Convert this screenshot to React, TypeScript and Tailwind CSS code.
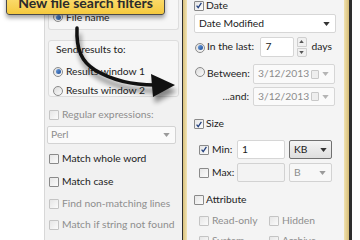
import React from "react";

const font = { fontFamily: "Lato, 'Liberation Sans', sans-serif" };

function Check({ checked = false, disabled = false }: { checked?: boolean; disabled?: boolean }) {
    return (
        <span
            className={`relative inline-flex h-[10px] w-[10px] shrink-0 items-center justify-center rounded-[1px] border bg-gradient-to-br from-[#e6e6e6] to-[#fbfbfb] ${
                disabled ? "border-[#c4c4c4]" : "border-[#8a8a8a]"
            }`}
        >
            {checked && (
                <svg viewBox="0 0 10 10" className="h-[9px] w-[9px]">
                    <path d="M2 5.2 L4 7.6 L8 1.6" fill="none" stroke="#23407e" strokeWidth="1.6" />
                </svg>
            )}
        </span>
    );
}

function Radio({ on = false }: { on?: boolean }) {
    return (
        <span className="inline-flex h-[10px] w-[10px] shrink-0 items-center justify-center rounded-full border border-[#8a8a8a] bg-gradient-to-br from-[#dcdcdc] to-[#fafafa]">
            {on && <span className="h-[5px] w-[5px] rounded-full bg-gradient-to-br from-[#6fa0de] to-[#1d4e99]" />}
        </span>
    );
}

function Caret({ color = "#333" }: { color?: string }) {
    return (
        <svg viewBox="0 0 8 5" className="h-[4px] w-[7px] shrink-0">
            <path d="M0 0 H8 L4 5 Z" fill={color} />
        </svg>
    );
}

function DateBox({ value }: { value: string }) {
    return (
        <div className="ml-auto mr-[9px] flex h-full w-[82px] shrink-0 items-center rounded-[2px] border border-[#d6d6d6] bg-[#fafafa] pl-[4px] pr-[5px] text-[#8c8c8c]">
            <span>{value}</span>
            <span className="ml-auto mr-[3px] h-[9px] w-[8px] rounded-[1px] border border-[#c8c8c8] bg-[#eeeeee]" />
            <Caret color="#b5b5b5" />
        </div>
    );
}

export default function App() {
    return (
        <div
            className="relative flex h-[240px] w-[360px] overflow-hidden whitespace-nowrap bg-white text-[10.3px] text-[#222]"
            style={font}
        >
            {/* left spacer */}
            <div className="w-[44px] shrink-0 bg-white" />

            {/* left search options panel */}
            <div className="flex w-[138px] shrink-0 flex-col border-l border-[#d8d8d8] bg-[#f1f1f1] pl-[3px] *:shrink-0">
                <div className="flex h-[30px] w-[131px] items-end rounded-b-[3px] border-x border-b border-[#dddddd] bg-[#f6f6f6] pb-[4px] pl-[4px]">
                    <div className="flex items-center gap-[3px]">
                        <Radio on />
                        <span>File name</span>
                    </div>
                </div>

                <div className="mt-[10px] flex h-[57px] w-[131px] flex-col rounded-[3px] border border-[#dddddd] bg-[#f6f6f6] pl-[4px]">
                    <span className="mt-[2px] pl-[3px] leading-[13px]">Send results to:</span>
                    <div className="mt-[8px] flex items-center gap-[3px]">
                        <Radio on />
                        <span>Results window 1</span>
                    </div>
                    <div className="mt-[4px] flex items-center gap-[3px]">
                        <Radio />
                        <span>Results window 2</span>
                    </div>
                </div>

                <div className="mt-[13px] flex h-[10px] items-center gap-[3px] pl-[1px]">
                    <Check disabled />
                    <span className="text-[#8e8e8e]">Regular expressions:</span>
                </div>

                <div className="ml-[-1px] mt-[6px] flex h-[18px] w-[129px] items-center justify-between rounded-[2px] border border-[#d3d3d3] bg-[#fafafa] pl-[3px] pr-[5px] text-[#8e8e8e]">
                    <span>Perl</span>
                    <Caret color="#9a9a9a" />
                </div>

                {[
                    ["Match whole word", false, 10],
                    ["Match case", false, 13],
                    ["Find non-matching lines", true, 12],
                    ["Match if string not found", true, 11],
                    ["Use file filter", false, 11],
                ].map(([label, disabled, mt]) => (
                    <div
                        key={label as string}
                        className="flex h-[10px] items-center gap-[3px] pl-[1px]"
                        style={{ marginTop: mt as number }}
                    >
                        <Check disabled={disabled as boolean} />
                        <span className={disabled ? "text-[#8e8e8e]" : ""}>{label as string}</span>
                    </div>
                ))}
            </div>

            {/* right filters panel with highlight */}
            <div className="flex w-[170px] shrink-0 border-l-[1.5px] border-r-[3px] border-[#2e2e2e]">
                <div className="w-[4px] bg-gradient-to-r from-[#d8c17c] to-[#f3e4b4]" />
                <div className="flex flex-1 flex-col bg-[#f4f4f4] pl-[7px] *:shrink-0">
                    <div className="flex h-[11px] items-center gap-[2px]">
                        <Check checked />
                        <span>Date</span>
                    </div>

                    <div className="mr-[8px] mt-[3px] flex h-[19px] items-center justify-between rounded-[2px] border border-[#d6d6d6] bg-white pl-[4px] pr-[5px]">
                        <span>Date Modified</span>
                        <Caret />
                    </div>

                    <div className="mt-[4px] flex h-[20px] items-center">
                        <span className="ml-[1px]">
                            <Radio on />
                        </span>
                        <span className="ml-[2px]">In the last:</span>
                        <div className="ml-auto flex h-full w-[34px] items-center rounded-[2px] border border-[#d6d6d6] bg-white pl-[5px]">
                            7
                        </div>
                        <div className="ml-[3px] flex h-full w-[10px] flex-col gap-[1px]">
                            <div className="flex flex-1 items-center justify-center rounded-t-[2px] border border-[#cfcfcf] bg-[#f0f0f0]">
                                <svg viewBox="0 0 6 4" className="h-[3px] w-[5px]">
                                    <path d="M0 4 L3 0 L6 4 Z" fill="#555" />
                                </svg>
                            </div>
                            <div className="flex flex-1 items-center justify-center rounded-b-[2px] border border-[#cfcfcf] bg-[#f0f0f0]">
                                <svg viewBox="0 0 6 4" className="h-[3px] w-[5px]">
                                    <path d="M0 0 L6 0 L3 4 Z" fill="#555" />
                                </svg>
                            </div>
                        </div>
                        <span className="ml-[5px] mr-[12px]">days</span>
                    </div>

                    <div className="mt-[7px] flex h-[20px] items-center">
                        <span className="ml-[1px]">
                            <Radio />
                        </span>
                        <span className="ml-[2px]">Between:</span>
                        <DateBox value="3/12/2013" />
                    </div>

                    <div className="mt-[3px] flex h-[19px] items-center">
                        <span className="ml-auto mr-[4px]">...and:</span>
                        <div className="flex h-full">
                            <DateBox value="3/12/2013" />
                        </div>
                    </div>

                    <div className="mt-[13px] flex h-[10px] items-center gap-[2px]">
                        <Check checked />
                        <span>Size</span>
                    </div>

                    <div className="mt-[11px] flex h-[19px] items-center pl-[5px]">
                        <Check checked />
                        <span className="ml-[3px] w-[25px]">Min:</span>
                        <div className="flex h-full w-[48px] items-center rounded-[2px] border border-[#d6d6d6] bg-white pl-[4px]">
                            1
                        </div>
                        <div className="ml-[4px] flex h-full w-[43px] items-center justify-between rounded-[2px] border border-[#707070] bg-gradient-to-b from-[#f4f4f4] to-[#dedede] pl-[4px] pr-[4px]">
                            <span>KB</span>
                            <Caret />
                        </div>
                    </div>

                    <div className="mt-[4px] flex h-[19px] items-center pl-[5px]">
                        <Check />
                        <span className="ml-[3px] w-[25px]">Max:</span>
                        <div className="h-full w-[48px] rounded-[2px] border border-[#d2d2d2] bg-[#f3f3f3]" />
                        <div className="ml-[4px] flex h-full w-[43px] items-center justify-between rounded-[2px] border border-[#d2d2d2] bg-[#f7f7f7] pl-[4px] pr-[5px] text-[#8e8e8e]">
                            <span>B</span>
                            <Caret color="#9a9a9a" />
                        </div>
                    </div>

                    <div className="mt-[13px] flex h-[10px] items-center gap-[2px]">
                        <Check />
                        <span>Attribute</span>
                    </div>

                    <div className="mt-[11px] flex h-[10px] items-center pl-[5px] text-[#8e8e8e]">
                        <Check disabled />
                        <span className="ml-[3px] w-[57px]">Read-only</span>
                        <Check disabled />
                        <span className="ml-[3px]">Hidden</span>
                    </div>

                    <div className="mt-[10px] flex h-[10px] items-center pl-[5px] text-[#8e8e8e]">
                        <Check disabled />
                        <span className="ml-[3px] w-[57px]">System</span>
                        <Check disabled />
                        <span className="ml-[3px]">Archive</span>
                    </div>
                </div>
                <div className="w-[5px] bg-gradient-to-r from-[#f0e2b0] to-[#d6bd77]" />
            </div>

            <div className="flex-1 bg-white" />

            {/* callout */}
            <div className="absolute left-[6px] top-[-8px] flex h-[23px] w-[159px] items-end justify-center rounded-[3px] border border-[#4a4a4a] bg-gradient-to-b from-[#fde27a] to-[#f5c93c] pb-[4px] shadow-[0_3px_4px_rgba(0,0,0,0.35)]">
                <span className="text-[14px] font-bold leading-[14px] text-[#2b2b2b]">New file search filters</span>
            </div>

            {/* arrow */}
            <svg className="pointer-events-none absolute left-0 top-0" width="360" height="240" viewBox="0 0 360 240">
                <defs>
                    <filter id="blur" x="-20%" y="-20%" width="140%" height="140%">
                        <feGaussianBlur stdDeviation="2.5" />
                    </filter>
                </defs>
                <g filter="url(#blur)" opacity="0.45" transform="translate(2 6)">
                    <path d="M77 28 C76 50 82 62 95 70 C110 79 130 85 155 85" fill="none" stroke="#000" strokeWidth="4" />
                    <path d="M151 74 L175 85 L153 97 Z" fill="#000" />
                </g>
                <path d="M77 28 C76 50 82 62 95 70 C110 79 130 85 155 85" fill="none" stroke="#111" strokeWidth="3.5" strokeLinecap="round" />
                <path d="M151 74 L175 85 L153 97 Z" fill="#111" />
            </svg>
        </div>
    );
}
